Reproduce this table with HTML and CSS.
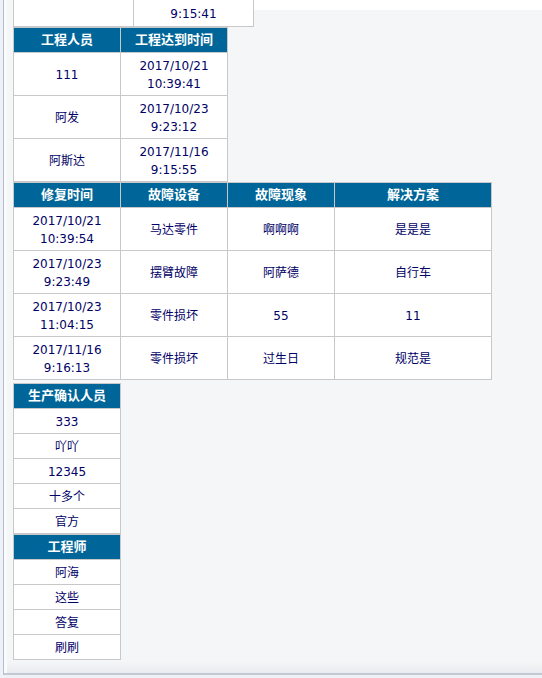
FILE: index.html
```html
<!DOCTYPE html>
<html lang="zh-CN">
<head>
<meta charset="utf-8">
<title>故障记录</title>
<link rel="stylesheet" href="styles.css">
</head>
<body>
<div class="panel">
  <div class="content">
    <table class="grid t-first">
      <tr><td class="c120 tail"></td><td class="c120 tail">9:15:41</td></tr>
    </table>
    <table class="grid">
      <tr><th class="c107">工程人员</th><th class="c107">工程达到时间</th></tr>
      <tr><td class="two">111</td><td class="two">2017/10/21<br>10:39:41</td></tr>
      <tr><td class="two">阿发</td><td class="two">2017/10/23<br>9:23:12</td></tr>
      <tr><td class="two">阿斯达</td><td class="two">2017/11/16<br>9:15:55</td></tr>
    </table>
    <table class="grid">
      <tr><th class="c107">修复时间</th><th class="c107">故障设备</th><th class="c107">故障现象</th><th class="c157">解决方案</th></tr>
      <tr><td class="two">2017/10/21<br>10:39:54</td><td class="two">马达零件</td><td class="two">啊啊啊</td><td class="two">是是是</td></tr>
      <tr><td class="two">2017/10/23<br>9:23:49</td><td class="two">摆臂故障</td><td class="two">阿萨德</td><td class="two">自行车</td></tr>
      <tr><td class="two">2017/10/23<br>11:04:15</td><td class="two">零件损坏</td><td class="two">55</td><td class="two">11</td></tr>
      <tr><td class="two">2017/11/16<br>9:16:13</td><td class="two">零件损坏</td><td class="two">过生日</td><td class="two">规范是</td></tr>
    </table>
    <table class="grid t-gap">
      <tr><th class="c107">生产确认人员</th></tr>
      <tr><td class="one">333</td></tr>
      <tr><td class="one">吖吖</td></tr>
      <tr><td class="one">12345</td></tr>
      <tr><td class="one">十多个</td></tr>
      <tr><td class="one">官方</td></tr>
    </table>
    <table class="grid">
      <tr><th class="c107">工程师</th></tr>
      <tr><td class="one">阿海</td></tr>
      <tr><td class="one">这些</td></tr>
      <tr><td class="one">答复</td></tr>
      <tr><td class="one">刷刷</td></tr>
    </table>
  </div>
</div>
</body>
</html>
```

FILE: styles.css
```css
html, body {
  margin: 0;
  padding: 0;
  height: 678px;
  overflow: hidden;
}
body {
  background: #eef1f5;
  font-family: "DejaVu Sans", "Noto Sans CJK SC", sans-serif;
  font-size: 12px;
  color: #000066;
}
.panel {
  display: flow-root;
  box-sizing: border-box;
  margin-left: 3px;
  height: 675px;
  border-left: 1px solid #b3bdcd;
  border-bottom: 2px solid #c2c9d4;
  padding-left: 9px;
  background: linear-gradient(to bottom, #f5f6f8 0, #f5f6f8 661px, #e9ecef 673px);
  box-shadow: inset 3px 0 0 #fafbfc;
}
.content {
  display: flow-root;
  background: linear-gradient(to bottom, #ffffff 0, #ffffff 10px, transparent 10px);
}
.grid {
  border-collapse: collapse;
  background: #ffffff;
}
.grid th,
.grid td {
  border: 1px solid #c8c8c8;
  padding: 0;
  text-align: center;
  vertical-align: middle;
}
.grid th {
  background: #006699;
  color: #ffffff;
  font-size: 13px;
  font-weight: bold;
  height: 24px;
  line-height: 16px;
}
.grid td.two {
  height: 41px;
  line-height: 18px;
  padding-top: 1px;
}
.grid td.one {
  height: 23px;
  line-height: 16px;
  padding-top: 1px;
}
.grid td.tail {
  height: 39px;
  line-height: 18px;
  vertical-align: bottom;
  padding-bottom: 3px;
}
.c107 { width: 106px; }
.c120 { width: 119px; }
.c157 { width: 156px; }
.t-first {
  margin-top: -17px;
}
.t-gap {
  margin-top: 3px;
}
```
